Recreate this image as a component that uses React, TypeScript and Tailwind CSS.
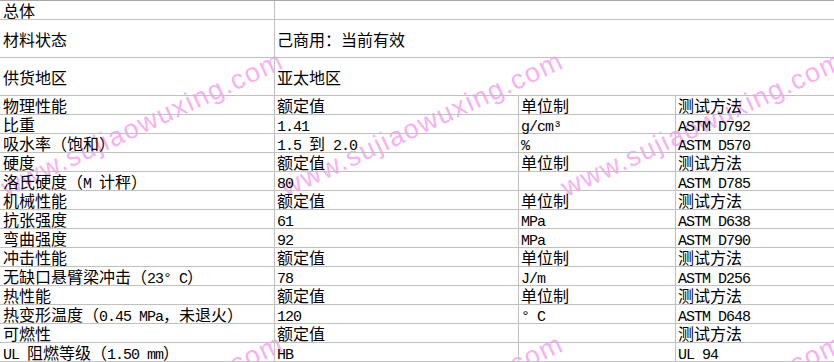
import React from "react";

type Row = { cells: string[]; h: "top" | "tall" | "row" };

const rows: Row[] = [
  { cells: ["总体", ""], h: "top" },
  { cells: ["材料状态", "己商用：当前有效"], h: "tall" },
  { cells: ["供货地区", "亚太地区"], h: "tall" },
  { cells: ["物理性能", "额定值", "单位制", "测试方法"], h: "row" },
  { cells: ["比重", "1.41", "g/cm³", "ASTM D792"], h: "row" },
  { cells: ["吸水率（饱和）", "1.5 到 2.0", "%", "ASTM D570"], h: "row" },
  { cells: ["硬度", "额定值", "单位制", "测试方法"], h: "row" },
  { cells: ["洛氏硬度（M 计秤）", "80", "", "ASTM D785"], h: "row" },
  { cells: ["机械性能", "额定值", "单位制", "测试方法"], h: "row" },
  { cells: ["抗张强度", "61", "MPa", "ASTM D638"], h: "row" },
  { cells: ["弯曲强度", "92", "MPa", "ASTM D790"], h: "row" },
  { cells: ["冲击性能", "额定值", "单位制", "测试方法"], h: "row" },
  { cells: ["无缺口悬臂梁冲击（23° C）", "78", "J/m", "ASTM D256"], h: "row" },
  { cells: ["热性能", "额定值", "单位制", "测试方法"], h: "row" },
  { cells: ["热变形温度（0.45 MPa，未退火）", "120", "° C", "ASTM D648"], h: "row" },
  { cells: ["可燃性", "额定值", "", "测试方法"], h: "row" },
  { cells: ["UL 阻燃等级（1.50 mm）", "HB", "", "UL 94"], h: "row" },
];

// half-width runs get a mono face, the rest the CJK face
function Txt({ s }: { s: string }) {
  const parts = s.split(/([\x20-\x7e°³]+)/).filter(Boolean);
  return (
    <span className="block h-[18px] whitespace-pre leading-[18px]">
      {parts.map((p, i) =>
        /^[\x20-\x7e°³]+$/.test(p) ? (
          <span
            key={i}
            className="font-['Liberation_Mono',monospace] text-[15px] tracking-[-1px]"
          >
            {p}
          </span>
        ) : (
          <span key={i}>{p}</span>
        )
      )}
    </span>
  );
}

const marks = [
  { left: "left-[3px]", top: "top-[176px]" },
  { left: "left-[283px]", top: "top-[176px]" },
  { left: "left-[563px]", top: "top-[176px]" },
  { left: "left-[3px]", top: "top-[459px]" },
  { left: "left-[283px]", top: "top-[459px]" },
  { left: "left-[563px]", top: "top-[459px]" },
];

export default function App() {
  return (
    <div className="relative w-[834px] h-[362px] overflow-hidden bg-white text-black font-['Noto_Sans_CJK_SC',sans-serif] text-[16px]">
      {/* watermark */}
      <div className="pointer-events-none absolute inset-0">
        {marks.map((m, i) => (
          <span
            key={i}
            className={`absolute ${m.left} ${m.top} origin-left -rotate-[25deg] whitespace-nowrap font-['Liberation_Sans',sans-serif] text-[27px] leading-none tracking-[1.5px] text-[#f8b0f2]`}
          >
            www.sujiaowuxing.com
          </span>
        ))}
      </div>

      <div className="absolute left-[275px] top-0 h-px w-[244px] bg-[#3b5ea8]" />

      <div className="relative">
        {rows.map((r, i) => {
          const hc =
            r.h === "top"
              ? "h-[20px] border-t border-t-[#a8a8a8]"
              : r.h === "tall"
              ? "h-[38px]"
              : "h-[19px]";
          return (
            <div
              key={i}
              className={`flex ${hc} border-b border-b-[#c0c0c0]`}
            >
              <div className="flex w-[275px] shrink-0 items-center border-r border-r-[#c0c0c0] pl-[3px]">
                <Txt s={r.cells[0]} />
              </div>
              {r.cells.length === 2 ? (
                <div className="flex flex-1 items-center pl-[2px]">
                  <Txt s={r.cells[1]} />
                </div>
              ) : (
                <>
                  <div className="flex w-[244px] shrink-0 items-center border-r border-r-[#c0c0c0] pl-[2px]">
                    <Txt s={r.cells[1]} />
                  </div>
                  <div className="flex w-[157px] shrink-0 items-center border-r border-r-[#c0c0c0] pl-[2px]">
                    <Txt s={r.cells[2]} />
                  </div>
                  <div className="flex flex-1 items-center pl-[2px]">
                    <Txt s={r.cells[3]} />
                  </div>
                </>
              )}
            </div>
          );
        })}
      </div>
    </div>
  );
}
